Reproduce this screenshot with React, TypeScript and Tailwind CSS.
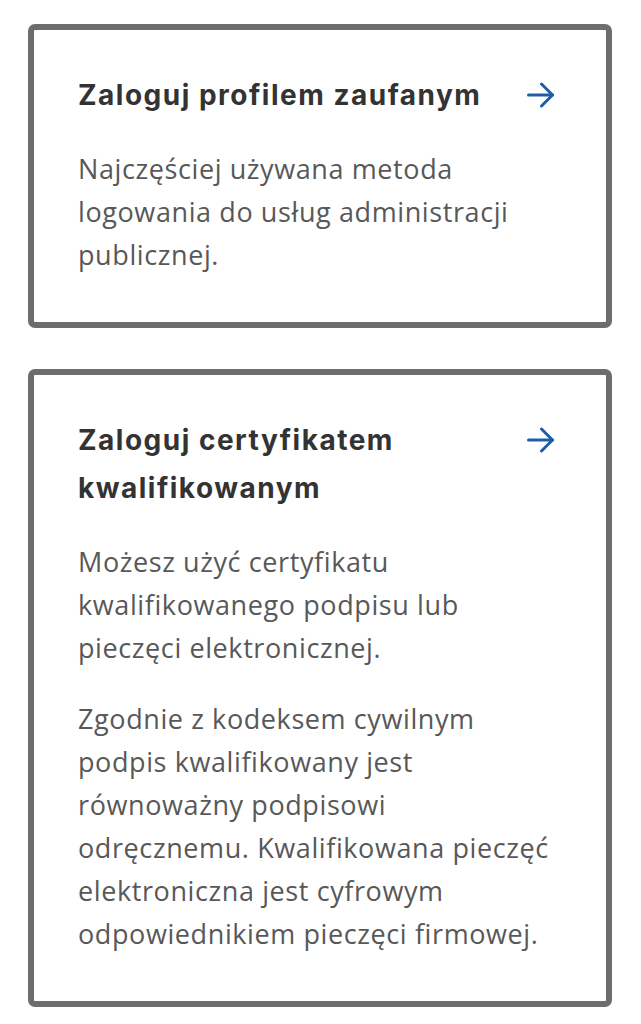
import React from "react";

function Arrow() {
  return (
    <svg width="28" height="26" viewBox="0 0 28 26" fill="none" className="shrink-0 mt-[11px] mr-[7px]">
      <path d="M1.5 13h24" stroke="#1d5ea8" strokeWidth="3" strokeLinecap="round" />
      <path d="M14.5 2l11 11-11 11" stroke="#1d5ea8" strokeWidth="3" strokeLinecap="round" strokeLinejoin="round" />
    </svg>
  );
}

function LoginCard({ title, paragraphs }: { title: string; paragraphs: string[] }) {
  return (
    <div className="border-[6px] border-[#6d6d6d] rounded-[7px] bg-white px-[44px] pt-[41px] pb-[46px]">
      <div className="flex items-start justify-between gap-6 mb-[28px]">
        <h2 className="font-['Inter',sans-serif] font-bold text-[28px] tracking-[1.5px] leading-[48px] text-[#333333] max-w-[420px]">
          {title}
        </h2>
        <Arrow />
      </div>
      <div className="flex flex-col gap-[28px] max-w-[481px]">
        {paragraphs.map((p) => (
          <p
            key={p}
            className="font-['Open_Sans',sans-serif] text-[27px] tracking-[0.6px] leading-[43px] text-[#585858]"
          >
            {p}
          </p>
        ))}
      </div>
    </div>
  );
}

export default function App() {
  return (
    <div className="min-h-screen bg-white pt-[24px] pl-[28px] pr-[29px] flex flex-col gap-[41px]">
      <LoginCard
        title="Zaloguj profilem zaufanym"
        paragraphs={["Najczęściej używana metoda logowania do usług administracji publicznej."]}
      />
      <LoginCard
        title="Zaloguj certyfikatem kwalifikowanym"
        paragraphs={[
          "Możesz użyć certyfikatu kwalifikowanego podpisu lub pieczęci elektronicznej.",
          "Zgodnie z kodeksem cywilnym podpis kwalifikowany jest równoważny podpisowi odręcznemu. Kwalifikowana pieczęć elektroniczna jest cyfrowym odpowiednikiem pieczęci firmowej.",
        ]}
      />
    </div>
  );
}
